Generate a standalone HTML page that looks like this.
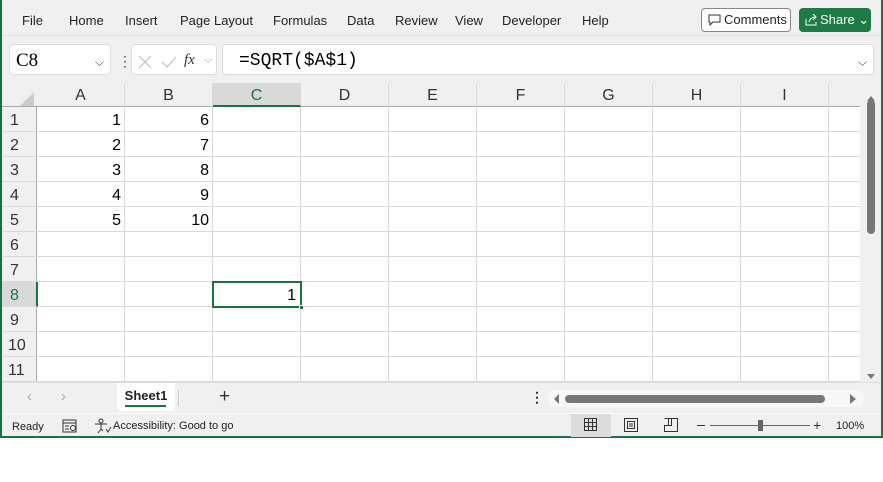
<!DOCTYPE html><html><head><style>
*{box-sizing:border-box;margin:0;padding:0}
body{width:883px;height:482px;background:#fff;font-family:"Liberation Sans",sans-serif;position:relative;overflow:hidden}
.a{position:absolute}
.app{left:0;top:0;width:883px;height:438px;background:#f0f0f0;border:2px solid #1e7145;border-top:none}
.menu span{position:absolute;top:13px;font-size:13px;color:#222}
.col{position:absolute;top:83px;height:24px;text-align:center;font-size:16px;color:#333;line-height:26px;border-right:1px solid #d8d8d8}
.row{position:absolute;left:2px;width:35px;height:25px;font-size:16px;color:#333;line-height:28px;padding-left:8px;border-bottom:1px solid #d8d8d8}
.c{position:absolute;font-size:16px;text-align:right;line-height:28px;width:84px;color:#000}
</style></head><body>
<div class="a app"></div>
<div class="menu">
<span style="left:22px">File</span><span style="left:69px">Home</span><span style="left:125px">Insert</span><span style="left:180px">Page Layout</span><span style="left:273px">Formulas</span><span style="left:347px">Data</span><span style="left:395px">Review</span><span style="left:455px">View</span><span style="left:502px">Developer</span><span style="left:582px">Help</span>
</div>
<div class="a" style="left:701px;top:8px;width:90px;height:24px;border:1px solid #888;border-radius:4px;background:#fff;font-size:13px;line-height:22px;padding-left:22px;color:#222">Comments
<svg class="a" style="left:6px;top:5px" width="13" height="12"><path d="M1 1H12V8H5L2 11V8H1Z" fill="none" stroke="#333"/></svg></div>
<div class="a" style="left:799px;top:8px;width:72px;height:24px;border-radius:4px;background:#1e7b45;font-size:13px;line-height:24px;padding-left:21px;color:#fff">Share ⌄
<svg class="a" style="left:6px;top:6px" width="13" height="12"><path d="M1 5V11H11V8M4 8C5 4 8 3 11 3M8 0L11 3L8 6" fill="none" stroke="#fff"/></svg></div>
<div class="a" style="left:2px;top:35px;width:879px;height:1px;background:#ddd"></div>
<div class="a" style="left:9px;top:44px;width:102px;height:31px;background:#fff;border:1px solid #ddd;border-radius:4px;font-family:'Liberation Serif',serif;font-size:19px;line-height:32px;padding-left:6px">C8<span class="a" style="right:6px;top:1px;font-family:'Liberation Sans';font-size:12px;color:#444">⌵</span></div>
<div class="a" style="left:118px;top:53px;font-size:14px;color:#444">⋮</div>
<div class="a" style="left:131px;top:44px;width:86px;height:31px;background:#fff;border:1px solid #ddd;border-radius:4px">
<svg class="a" style="left:6px;top:9px" width="60" height="16"><path d="M1 2L13 14M13 2L1 14" stroke="#bbb"/><path d="M24 8L29 13L38 3" fill="none" stroke="#bbb"/></svg>
<span class="a" style="left:52px;top:7px;font-family:'Liberation Serif',serif;font-style:italic;font-size:15px;color:#333">fx</span><span class="a" style="left:72px;top:9px;font-size:11px;color:#999">⌵</span></div>
<div class="a" style="left:222px;top:44px;width:652px;height:31px;background:#fff;border:1px solid #ddd;border-radius:4px;font-family:'Liberation Mono',monospace;font-size:18px;line-height:33px;padding-left:16px">=SQRT($A$1)<span class="a" style="right:6px;top:1px;font-family:'Liberation Sans';font-size:12px;color:#444">⌵</span></div>
<!-- grid -->
<div class="a" style="left:37px;top:107px;width:823px;height:275px;background:#fff;background-image:linear-gradient(#d8d8d8 1px,transparent 1px),linear-gradient(90deg,#d8d8d8 1px,transparent 1px);background-size:88px 25px;background-position:0 -1px,-1px 0"></div>
<div class="a" style="left:2px;top:83px;width:858px;height:24px;background:#f0f0f0;border-bottom:1px solid #aaa"></div>
<svg class="a" style="left:18px;top:92px" width="16" height="14"><path d="M16 0V14H2Z" fill="#ccc"/></svg>
<div class="col" style="left:37px;width:88px">A</div><div class="col" style="left:125px;width:88px">B</div><div class="col" style="left:213px;width:88px;background:#d9d9d9;color:#1e7145;border-bottom:2px solid #1e7145">C</div><div class="col" style="left:301px;width:88px">D</div><div class="col" style="left:389px;width:88px">E</div><div class="col" style="left:477px;width:88px">F</div><div class="col" style="left:565px;width:88px">G</div><div class="col" style="left:653px;width:88px">H</div><div class="col" style="left:741px;width:88px">I</div>
<div class="a" style="left:2px;top:107px;width:35px;height:275px;background:#f0f0f0;border-right:1px solid #aaa"></div>
<div class="row" style="top:107px">1</div><div class="row" style="top:132px">2</div><div class="row" style="top:157px">3</div><div class="row" style="top:182px">4</div><div class="row" style="top:207px">5</div><div class="row" style="top:232px">6</div><div class="row" style="top:257px">7</div><div class="row" style="top:282px;background:#d9d9d9;color:#1e7145;border-right:2px solid #1e7145;width:36px">8</div><div class="row" style="top:307px">9</div><div class="row" style="top:332px;padding-left:6px">10</div><div class="row" style="top:357px;padding-left:6px">11</div>
<div class="c" style="left:37px;top:107px">1</div><div class="c" style="left:37px;top:132px">2</div><div class="c" style="left:37px;top:157px">3</div><div class="c" style="left:37px;top:182px">4</div><div class="c" style="left:37px;top:207px">5</div>
<div class="c" style="left:125px;top:107px">6</div><div class="c" style="left:125px;top:132px">7</div><div class="c" style="left:125px;top:157px">8</div><div class="c" style="left:125px;top:182px">9</div><div class="c" style="left:125px;top:207px">10</div>
<div class="a" style="left:212px;top:281px;width:90px;height:27px;border:2px solid #1e7145;font-size:16px;text-align:right;line-height:26px;padding-right:4px">1</div>
<div class="a" style="left:299px;top:305px;width:5px;height:5px;background:#1e7145;border:1px solid #fff"></div>
<!-- vscroll -->
<div class="a" style="left:860px;top:83px;width:21px;height:299px;background:#f0f0f0"></div>
<svg class="a" style="left:865px;top:94px" width="12" height="290"><path d="M2 7L6 2L10 7Z" fill="#777"/><rect x="2" y="6" width="8" height="134" rx="4" fill="#777"/><path d="M2 280L6 285L10 280Z" fill="#777"/></svg>
<!-- tabs -->
<div class="a" style="left:2px;top:382px;width:879px;height:1px;background:#ddd"></div>
<div class="a" style="left:27px;top:388px;font-size:15px;color:#aaa">‹</div><div class="a" style="left:61px;top:388px;font-size:15px;color:#aaa">›</div>
<div class="a" style="left:117px;top:383px;width:58px;height:28px;background:#fff;border-radius:0 0 5px 5px;font-size:13px;font-weight:bold;text-align:center;line-height:26px;color:#222">Sheet1<div class="a" style="left:8px;top:22px;width:41px;height:2px;background:#1e7145"></div></div>
<div class="a" style="left:178px;top:390px;width:1px;height:16px;background:#ccc"></div>
<div class="a" style="left:219px;top:386px;font-size:19px;color:#333">+</div>
<div class="a" style="left:530px;top:389px;font-size:14px;color:#333;font-weight:bold">⋮</div>
<div class="a" style="left:548px;top:390px;width:316px;height:17px;background:#f7f7f7;border-radius:8px"></div>
<svg class="a" style="left:552px;top:392px" width="310" height="14"><path d="M7 2L2 7L7 12Z" fill="#777"/><rect x="13" y="3" width="260" height="8" rx="4" fill="#777"/><path d="M298 2L304 7L298 12Z" fill="#777"/></svg>
<!-- status -->
<div class="a" style="left:2px;top:413px;width:879px;height:1px;background:#fafafa"></div>
<div class="a" style="left:12px;top:421px;font-size:11px;color:#222">Ready</div>
<svg class="a" style="left:62px;top:419px" width="16" height="14"><rect x="1" y="1" width="13" height="12" fill="none" stroke="#333"/><path d="M1 4H14M3 7H7M3 10H7" stroke="#333"/><circle cx="11" cy="9" r="2.5" fill="none" stroke="#333"/></svg>
<svg class="a" style="left:94px;top:418px" width="18" height="16"><circle cx="7" cy="3" r="2" fill="none" stroke="#333"/><path d="M1 6H13M7 6V11L4 15M7 11L9 13M12 11L14 14L17 9" fill="none" stroke="#333"/></svg>
<div class="a" style="left:113px;top:420px;font-size:11px;color:#222">Accessibility: Good to go</div>
<div class="a" style="left:571px;top:414px;width:40px;height:23px;background:#dcdcdc"></div>
<svg class="a" style="left:584px;top:418px" width="130" height="16"><path d="M0.5 0.5H12.5V12.5H0.5ZM4.5 0.5V12.5M8.5 0.5V12.5M0.5 4.5H12.5M0.5 8.5H12.5" fill="none" stroke="#333"/><path d="M40.5 0.5H53.5V13.5H40.5ZM43.5 3.5H50.5V10.5H43.5ZM45 6H49M45 8H49" fill="none" stroke="#333"/><path d="M80.5 0.5H93.5V13.5H80.5V7.5H87.5V0.5M84.5 0.5V7.5" fill="none" stroke="#333"/></svg>
<div class="a" style="left:697px;top:425px;width:8px;height:1px;background:#333"></div>
<div class="a" style="left:710px;top:425px;width:100px;height:1px;background:#666"></div>
<div class="a" style="left:758px;top:420px;width:5px;height:11px;background:#666"></div>
<div class="a" style="left:813px;top:417px;font-size:14px;color:#333">+</div>
<div class="a" style="left:836px;top:420px;font-size:11px;color:#222">100%</div>
</body></html>
